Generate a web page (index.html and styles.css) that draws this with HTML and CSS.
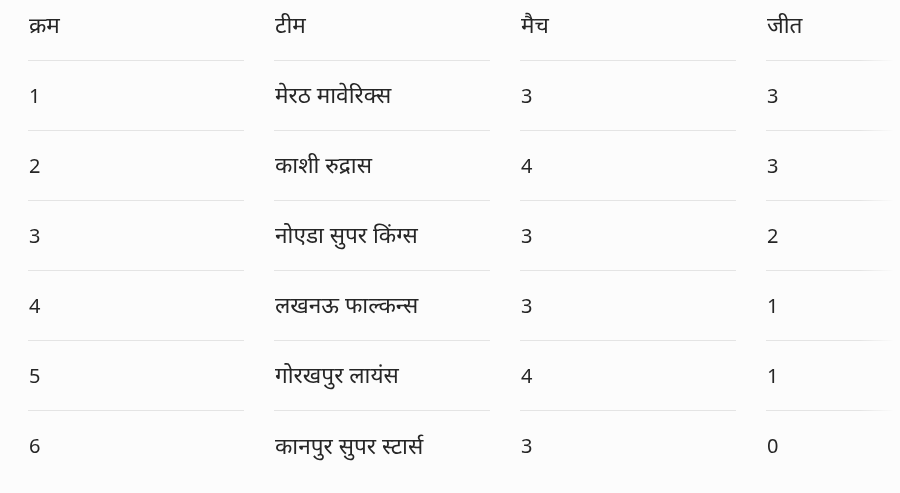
FILE: index.html
```html
<!DOCTYPE html>
<html lang="hi">
<head>
<meta charset="utf-8">
<link rel="stylesheet" href="styles.css">
</head>
<body>
<div class="table">
  <div class="row head">
    <div class="cell hi">क्रम</div>
    <div class="cell hi">टीम</div>
    <div class="cell hi">मैच</div>
    <div class="cell hi">जीत</div>
  </div>
  <div class="row">
    <div class="cell">1</div>
    <div class="cell hi">मेरठ मावेरिक्स</div>
    <div class="cell">3</div>
    <div class="cell">3</div>
  </div>
  <div class="row">
    <div class="cell">2</div>
    <div class="cell hi">काशी रुद्रास</div>
    <div class="cell">4</div>
    <div class="cell">3</div>
  </div>
  <div class="row">
    <div class="cell">3</div>
    <div class="cell hi">नोएडा सुपर किंग्स</div>
    <div class="cell">3</div>
    <div class="cell">2</div>
  </div>
  <div class="row">
    <div class="cell">4</div>
    <div class="cell hi">लखनऊ फाल्कन्स</div>
    <div class="cell">3</div>
    <div class="cell">1</div>
  </div>
  <div class="row">
    <div class="cell">5</div>
    <div class="cell hi">गोरखपुर लायंस</div>
    <div class="cell">4</div>
    <div class="cell">1</div>
  </div>
  <div class="row last">
    <div class="cell">6</div>
    <div class="cell hi">कानपुर सुपर स्टार्स</div>
    <div class="cell">3</div>
    <div class="cell">0</div>
  </div>
</div>
</body>
</html>
```

FILE: styles.css
```css
html, body {
  margin: 0;
  padding: 0;
  background: #fcfcfc;
}
body {
  font-family: "Noto Sans", Roboto, "Noto Sans Devanagari", sans-serif;
  font-size: 20px;
  color: #262626;
  width: 900px;
  height: 493px;
  overflow: hidden;
}
.table {
  padding-left: 28px;
  width: 954px;
  -webkit-mask-image: linear-gradient(to right, #000 860px, transparent 894px);
  mask-image: linear-gradient(to right, #000 860px, transparent 894px);
}
.row {
  display: grid;
  grid-template-columns: repeat(4, 216px);
  column-gap: 30px;
  height: 70px;
}
.row.head {
  height: 61px;
}
.cell {
  display: flex;
  align-items: center;
  padding-left: 1px;
  border-bottom: 1px solid #e4e4e4;
  line-height: 1;
}
.cell.hi {
  font-size: 22.6px;
}
.row.head .cell {
  align-items: flex-start;
  padding-top: 14px;
  box-sizing: border-box;
}
.row.last .cell {
  border-bottom: none;
}
```
